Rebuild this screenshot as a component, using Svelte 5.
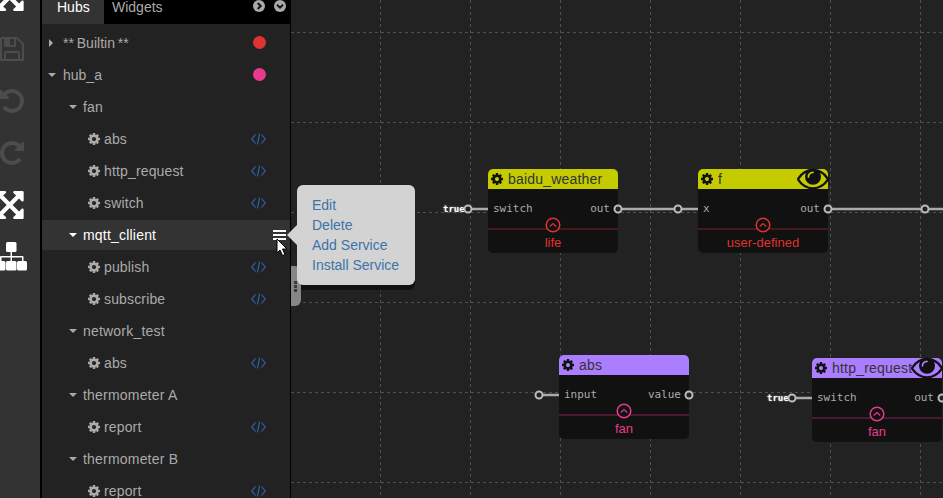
<script>
  const gear = "M1152 896q0-106-75-181t-181-75-181 75-75 181 75 181 181 75 181-75 75-181zm512-109v222q0 12-8 23t-20 13l-185 28q-19 54-39 91 35 50 107 138 10 12 10 25t-9 23q-27 37-99 108t-94 71q-12 0-26-9l-138-108q-44 23-91 38-16 136-29 186-7 28-36 28h-222q-14 0-24.500-8.500t-11.500-21.500l-28-184q-49-16-90-37l-141 107q-10 9-25 9-14 0-25-11-126-114-165-168-7-10-7-23 0-12 8-23 15-21 51-66.500t54-70.500q-27-50-41-99l-183-27q-13-2-21-12.500t-8-23.500v-222q0-12 8-23t19-13l186-28q14-46 39-92-40-57-107-138-10-12-10-24 0-10 9-23 26-36 98.500-107.500t94.500-71.500q13 0 26 10l138 107q44-23 91-38 16-136 29-186 7-28 36-28h222q14 0 24.500 8.500t11.500 21.500l28 184q49 16 90 37l142-107q9-9 24-9 13 0 25 10 129 119 165 170 7 8 7 22 0 12-8 23-15 21-51 66.500t-54 70.500q26 50 41 98l183 28q13 2 21 12.500t8 23.500z";
  const eye = "M1664 960q-152-236-381-353 61 104 61 225 0 185-131.500 316.500t-316.500 131.500-316.500-131.500-131.500-316.500q0-121 61-225-229 117-381 353 133 205 333.500 326.500t434.500 121.500 434.500-121.500 333.500-326.500zm-720-384q0-20-14-34t-34-14q-125 0-214.500 89.500t-89.500 214.500q0 20 14 34t34 14 34-14 14-34q0-86 61-147t147-61q20 0 34-14t14-34zm848 384q0 34-20 69-140 230-376.500 368.500t-499.500 138.500-499.500-139-376.500-368q-20-35-20-69t20-69q140-229 376.500-368t499.500-139 499.500 139 376.500 368q20 35 20 69z";
  const save = "M512 1536h768v-384h-768v384zm896 0h128v-896q0-14-10-38.500t-20-34.500l-281-281q-10-10-34-20t-39-10v416q0 40-28 68t-68 28h-576q-40 0-68-28t-28-68v-416h-128v1280h128v-416q0-40 28-68t68-28h832q40 0 68 28t28 68v416zm-384-928v-320q0-13-9.500-22.500t-22.500-9.500h-192q-13 0-22.500 9.500t-9.500 22.500v320q0 13 9.500 22.500t22.500 9.500h192q13 0 22.500-9.500t9.500-22.500zm640 32v928q0 40-28 68t-68 28h-1344q-40 0-68-28t-28-68v-1344q0-40 28-68t68-28h928q40 0 88 20t76 48l280 280q28 28 48 76t20 88z";
  const undo = "M1664 896q0 156-61 298t-164 245-245 164-298 61q-172 0-327-72.500t-264-204.500q-7-10-6.500-22.500t8.500-20.500l137-138q10-9 25-9 16 2 23 12 73 95 179 147t225 52q104 0 198.500-40.500t163.500-109.500 109.500-163.500 40.500-198.500-40.500-198.500-109.500-163.500-163.500-109.500-198.500-40.500q-98 0-188 35.500t-160 101.500l137 138q31 30 14 69-17 40-59 40h-448q-26 0-45-19t-19-45v-448q0-42 40-59 39-17 69 14l130 129q107-101 244.500-156.500t284.500-55.500q156 0 298 61t245 164 164 245 61 298z";
  const expand = "M1283 541l-355 355 355 355 144-144q29-31 70-14 39 17 39 59v448q0 26-19 45t-45 19h-448q-42 0-59-40-17-39 14-69l144-144-355-355-355 355 144 144q31 30 14 69-17 40-59 40h-448q-26 0-45-19t-19-45v-448q0-42 40-59 39-17 69 14l144 144 355-355-355-355-144 144q-19 19-45 19-12 0-24-5-40-17-40-59v-448q0-26 19-45t45-19h448q42 0 59 40 17 39-14 69l-144 144 355 355 355-355-144-144q-31-30-14-69 17-40 59-40h448q26 0 45 19t19 45v448q0 42-39 59-13 5-25 5-26 0-45-19z";

  const tree = [
    { l: 0, text: '** Builtin **', arrow: 'right', dot: '#dd3333' },
    { l: 0, text: 'hub_a', arrow: 'down', dot: '#e83a8c' },
    { l: 1, text: 'fan', arrow: 'down' },
    { l: 2, text: 'abs' },
    { l: 2, text: 'http_request' },
    { l: 2, text: 'switch' },
    { l: 1, text: 'mqtt_cllient', arrow: 'down', active: true },
    { l: 2, text: 'publish' },
    { l: 2, text: 'subscribe' },
    { l: 1, text: 'network_test', arrow: 'down' },
    { l: 2, text: 'abs' },
    { l: 1, text: 'thermometer A', arrow: 'down' },
    { l: 2, text: 'report' },
    { l: 1, text: 'thermometer B', arrow: 'down' },
    { l: 2, text: 'report' }
  ];

  const nodes = [
    { x: 488, y: 169, theme: 'yellow', title: 'baidu_weather', input: 'switch', output: 'out', hub: 'life', tone: 'red' },
    { x: 698, y: 169, theme: 'yellow', title: 'f', input: 'x', output: 'out', hub: 'user-defined', tone: 'red', eye: true },
    { x: 559, y: 355, theme: 'purple', title: 'abs', input: 'input', output: 'value', hub: 'fan', tone: 'pink' },
    { x: 812, y: 358, theme: 'purple', title: 'http_request', input: 'switch', output: 'out', hub: 'fan', tone: 'pink', eye: true }
  ];

  const wires = [[468, 209, 488, 209], [618, 209, 678, 209], [678, 209, 698, 209], [828, 209, 925, 209], [925, 209, 943, 209], [539, 395, 559, 395], [792, 398, 812, 398]];
  const ports = [[468, 209], [618, 209], [678, 209], [828, 209], [925, 209], [539, 395], [689, 395], [792, 398], [942, 398]];
  const trues = [[443, 209], [767, 398]];
  const menu = ['Edit', 'Delete', 'Add Service', 'Install Service'];
</script>

<div class="app">
  <nav class="tools">
    <svg class="tool bright" viewBox="128 128 1536 1536"><path d={expand} /></svg>
    <svg class="tool" viewBox="0 0 1792 1792"><path d={save} /></svg>
    <svg class="tool" viewBox="0 0 1792 1792"><path d={undo} /></svg>
    <svg class="tool" viewBox="0 0 1792 1792"><path d={undo} transform="matrix(-1 0 0 1 1792 0)" /></svg>
    <svg class="tool bright" viewBox="128 128 1536 1536"><path d={expand} /></svg>
    <svg class="tool bright map" viewBox="0 0 28 28">
      <rect x="6" y="0" width="10.500" height="10" rx="1.500" />
      <rect x="-4" y="19" width="9.500" height="9.500" rx="1.500" />
      <rect x="6" y="19" width="10.500" height="9.500" rx="1.500" />
      <rect x="17" y="19" width="10" height="9.500" rx="1.500" />
      <path d="M10.500 10h1.500v4h10.500a1 1 0 0 1 1 1v4h-1.500v-3.500H12V19h-1.500v-3.500H1.500V19H0v-4a1 1 0 0 1 1-1h9.500z" />
    </svg>
  </nav>

  <aside class="side">
    <div class="tabs">
      <span class="tab on">Hubs</span>
      <span class="tab">Widgets</span>
      <span class="tabtools">
        <svg viewBox="0 0 12 12"><circle cx="6" cy="6" r="6" /><path d="M4.700 3l3 3-3 3" /></svg>
        <svg viewBox="0 0 12 12"><circle cx="6" cy="6" r="6" /><path d="M3 4.700l3 3 3-3" /></svg>
      </span>
    </div>
    <ul class="tree">
      {#each tree as r}
        <li class="row l{r.l}" class:active={r.active}>
          {#if r.arrow === 'right'}<i class="tri right"></i>{:else if r.arrow === 'down'}<i class="tri down"></i>{/if}
          {#if r.l === 2}<svg class="gear" viewBox="0 0 1792 1792"><path d={gear} /></svg>{/if}
          <span class="label">{r.text}</span>
          {#if r.dot}<b class="dot" style="background:{r.dot}"></b>{/if}
          {#if r.l === 2}<svg class="code" viewBox="0 0 15 12"><path d="M4.500 1.500L.8 6l3.700 4.500M10.500 1.500L14.200 6l-3.700 4.500M8.600 .5L6.400 11.500" /></svg>{/if}
          {#if r.active}<span class="burger"><i></i><i></i><i></i></span>{/if}
        </li>
      {/each}
    </ul>
  </aside>

  <main class="canvas">
    <svg class="grid" width="943" height="498">
      {#each [380, 470, 560, 650, 740, 830, 920] as x}<line x1={x + .5} y1="0" x2={x + .5} y2="498" />{/each}
      {#each [32, 122, 212, 302, 392, 482] as y}<line x1="291" y1={y + .5} x2="943" y2={y + .5} />{/each}
    </svg>
    {#each trues as t}<span class="true" style="left:{t[0]}px;top:{t[1] - 7}px">true</span>{/each}

    {#each nodes as n}
      <article class="node {n.theme} {n.tone}" style="left:{n.x}px;top:{n.y}px">
        <header>
          <svg class="hgear" viewBox="0 0 1792 1792"><path d={gear} /></svg>
          <span>{n.title}</span>
          {#if n.eye}<svg class="eye" viewBox="0 0 1792 1792"><path d={eye} /></svg>{/if}
        </header>
        <div class="io"><span>{n.input}</span><span>{n.output}</span></div>
        <div class="hubline">
          <svg viewBox="0 0 16 16"><circle cx="8" cy="8" r="6.800" /><path d="M4.800 9.500L8 6.500l3.200 3" /></svg>
        </div>
        <div class="hubname">{n.hub}</div>
      </article>
    {/each}

    <svg class="wires" width="943" height="498">
      {#each wires as w}<line x1={w[0]} y1={w[1]} x2={w[2]} y2={w[3]} />{/each}
      {#each ports as p}<circle cx={p[0]} cy={p[1]} r="3.500" />{/each}
    </svg>

    <div class="popshadow"></div>
    <div class="handle"><i></i><i></i><i></i></div>
    <div class="pop">
      {#each menu as m}<a href="#top">{m}</a>{/each}
    </div>
    <svg class="cursor" width="13" height="19" viewBox="0 0 13 19"><path d="M1 1v14l3-3 2.500 5.500 2.500-1L6.500 11H11z" /></svg>
  </main>
</div>

<style>
  :global(body) { margin: 0; background: #222; }
  .app { display: flex; width: 943px; height: 498px; overflow: hidden; font-family: "Liberation Sans", Arial, sans-serif; font-size: 14px; color: #aaa; position: relative; }

  .tools { width: 40px; flex: none; background: #333; border-right: 2px solid #000; display: flex; flex-direction: column; gap: 24px; }
  .tool { width: 28px; height: 28px; flex: none; margin-left: -2px; fill: #4c4c4c; overflow: visible; }
  .tool:first-child { margin-top: -17px; }
  .tool.bright { fill: #fff; }
  .tool.map { margin-left: 0; margin-top: -1px; }

  .side { width: 248px; flex: none; background: #222; border-right: 1px solid #000; display: flex; flex-direction: column; }
  .tabs { height: 24px; flex: none; background: #000; display: flex; position: relative; line-height: 14px; }
  .tab { height: 24px; display: block; white-space: nowrap; }
  .tab.on { background: #333; color: #fff; width: 47px; padding-left: 15px; }
  .tab:not(.on) { padding-left: 8px; width: 60px; }
  .tabtools { margin-left: auto; margin-right: 4px; display: flex; gap: 9px; align-items: flex-start; }
  .tabtools svg { width: 12px; height: 12px; }
  .tabtools circle { fill: #aaa; }
  .tabtools path { fill: none; stroke: #111; stroke-width: 2; }

  .tree { list-style: none; margin: 0; padding: 4px 0 0; }
  .row { height: 30px; margin-bottom: 2px; display: flex; align-items: center; position: relative; }
  .row.active { background: #333; color: #fff; }
  .l0 { padding-left: 6px; word-spacing: -1px; }
  .l1 { padding-left: 27px; letter-spacing: .2px; }
  .l2 { padding-left: 45px; letter-spacing: .15px; }
  .tri { width: 0; height: 0; display: block; flex: none; }
  .tri.down { border: 4px solid transparent; border-top-color: currentColor; border-bottom: 0; border-left-width: 4.500px; border-right-width: 4.500px; margin-right: 6px; }
  .l0 .tri.down { margin-right: 7px; }
  .tri.right { border: 4.500px solid transparent; border-left-color: currentColor; border-right: 0; border-top-width: 4px; border-bottom-width: 4px; margin-right: 10px; margin-left: 1px; }
  .gear { width: 14px; height: 14px; fill: #aaa; margin-right: 3px; flex: none; }
  .dot { width: 13px; height: 13px; border-radius: 50%; position: absolute; left: 211px; top: 8px; }
  .code { width: 15px; height: 12px; position: absolute; left: 209px; top: 9px; fill: none; stroke: #2a69bd; stroke-width: 1.100; }
  .burger { position: absolute; left: 231px; top: 10px; width: 13px; display: flex; flex-direction: column; gap: 2px; }
  .burger i { display: block; height: 2px; background: #fff; }

  .canvas { position: absolute; inset: 0; pointer-events: none; }
  .grid, .wires { position: absolute; left: 0; top: 0; }
  .grid line { stroke: #505050; stroke-width: 1; stroke-dasharray: 3 3; }
  .wires line { stroke: #aaa; stroke-width: 2.500; }
  .wires circle { fill: #222; stroke: #bbb; stroke-width: 2; }
  .true { position: absolute; width: 20px; text-align: right; font: bold 9px/14px "DejaVu Sans Mono", monospace; color: #fff; text-shadow: 0 0 2px #999; }

  .node { position: absolute; width: 130px; height: 84px; background: #111; border-radius: 5px; font-size: 14px; }
  .node header { height: 20px; border-radius: 5px 5px 0 0; display: flex; align-items: center; padding-left: 2px; gap: 4px; color: #333; position: relative; white-space: nowrap; line-height: 20px; letter-spacing: .2px; }
  .yellow header { background: #c4cc00; }
  .purple header { background: #ab7dff; }
  .hgear { width: 14px; height: 14px; fill: #111; flex: none; }
  .eye { position: absolute; right: -1px; top: -7px; width: 32px; height: 32px; fill: #111; }
  .io { height: 30px; padding: 10px 8px 0 5px; box-sizing: border-box; display: flex; justify-content: space-between; align-items: center; font: 11px/20px "DejaVu Sans Mono", monospace; color: #aaa; }
  .hubline { height: 2px; margin-top: 9px; position: relative; }
  .red .hubline { background: #451a1a; }
  .pink .hubline { background: #4a1a35; }
  .hubline svg { position: absolute; left: 57px; top: -11px; width: 16px; height: 16px; fill: #111; stroke-width: 1.500; }
  .red .hubline svg { stroke: #dd3333; }
  .pink .hubline svg { stroke: #e83a8c; }
  .hubline path { fill: none; stroke-width: 1.200; }
  .hubname { text-align: center; font-size: 13px; line-height: 16px; margin-top: 5px; }
  .red .hubname { color: #dd3333; }
  .pink .hubname { color: #e83a8c; }

  .popshadow { position: absolute; left: 297px; top: 190px; width: 118px; height: 100px; background: #111; border-radius: 6px; }
  .handle { position: absolute; left: 291px; top: 266px; width: 10px; height: 40px; background: #868686; border-radius: 0 6px 6px 0; display: flex; flex-direction: column; justify-content: center; gap: 1px; padding-left: 3px; box-sizing: border-box; }
  .handle i { display: block; width: 3px; height: 3px; background: #3a3a3a; }
  .pop { position: absolute; left: 297px; top: 185px; width: 118px; height: 100px; box-sizing: border-box; padding: 10px 15px; background: #d3d3d3; border-radius: 6px; }
  .pop::before { content: ""; position: absolute; left: -10px; top: 40px; border: 10px solid transparent; border-left: 0; border-right-color: #d3d3d3; }
  .pop a { display: block; line-height: 20px; color: #3e74a8; text-decoration: none; white-space: nowrap; }
  .cursor { position: absolute; left: 276px; top: 238px; fill: #fff; stroke: #000; stroke-width: 1; }
</style>
